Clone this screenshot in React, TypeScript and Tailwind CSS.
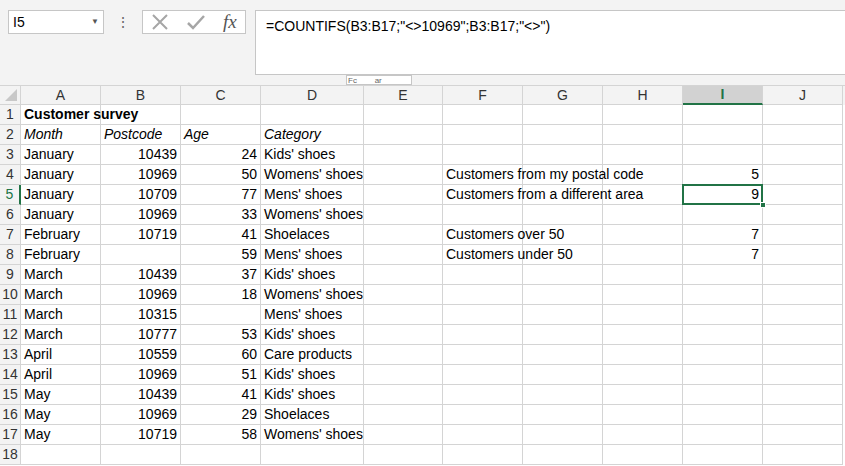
import React from 'react'

const cols = ['A', 'B', 'C', 'D', 'E', 'F', 'G', 'H', 'I', 'J']
const widths = ['w-[80px]', 'w-[80px]', 'w-[80px]', 'w-[103px]', 'w-[79px]', 'w-[80px]', 'w-[80px]', 'w-[80px]', 'w-[80px]', 'w-[80px]']

type Cell = { v: string; right?: boolean; bold?: boolean; italic?: boolean }
const rows: Record<number, Record<string, Cell>> = {
  1: { A: { v: 'Customer survey', bold: true } },
  2: { A: { v: 'Month', italic: true }, B: { v: 'Postcode', italic: true }, C: { v: 'Age', italic: true }, D: { v: 'Category', italic: true } },
}
const data: [string, string, string, string][] = [
  ['January', '10439', '24', "Kids' shoes"],
  ['January', '10969', '50', "Womens' shoes"],
  ['January', '10709', '77', "Mens' shoes"],
  ['January', '10969', '33', "Womens' shoes"],
  ['February', '10719', '41', 'Shoelaces'],
  ['February', '', '59', "Mens' shoes"],
  ['March', '10439', '37', "Kids' shoes"],
  ['March', '10969', '18', "Womens' shoes"],
  ['March', '10315', '', "Mens' shoes"],
  ['March', '10777', '53', "Kids' shoes"],
  ['April', '10559', '60', 'Care products'],
  ['April', '10969', '51', "Kids' shoes"],
  ['May', '10439', '41', "Kids' shoes"],
  ['May', '10969', '29', 'Shoelaces'],
  ['May', '10719', '58', "Womens' shoes"],
]
data.forEach((d, i) => {
  rows[i + 3] = { A: { v: d[0] }, B: { v: d[1], right: true }, C: { v: d[2], right: true }, D: { v: d[3] } }
})
rows[4].F = { v: 'Customers from my postal code' }
rows[4].I = { v: '5', right: true }
rows[5].F = { v: 'Customers from a different area' }
rows[5].I = { v: '9', right: true }
rows[7].F = { v: 'Customers over 50' }
rows[7].I = { v: '7', right: true }
rows[8].F = { v: 'Customers under 50' }
rows[8].I = { v: '7', right: true }

export default function App() {
  return (
    <div className="w-[845px] h-[466px] overflow-hidden bg-white text-[14px] text-black" style={{ fontFamily: '"Liberation Sans", Arial, sans-serif' }}>
      <div className="h-[85px] bg-[#f3f3f3] flex items-start pt-[10px] pl-[8px] relative">
        <div className="w-[96px] h-[24px] bg-white border border-[#c6c6c6] flex items-center justify-between px-[4px]">
          <span>I5</span>
          <span className="text-[8px] text-[#555]">▼</span>
        </div>
        <div className="w-[38px] h-[24px] flex items-center justify-center text-[#666] text-[14px]">⋮</div>
        <div className="w-[104px] h-[24px] bg-white border border-[#c6c6c6] flex items-center justify-around">
          <svg width="18" height="18" viewBox="0 0 18 18"><path d="M2 2L16 16M16 2L2 16" stroke="#a6a6a6" strokeWidth="2" /></svg>
          <svg width="20" height="18" viewBox="0 0 20 18"><path d="M2 10L7 15L18 3" stroke="#a6a6a6" strokeWidth="2.5" fill="none" /></svg>
          <span className="italic text-[19px] text-[#555]" style={{ fontFamily: '"Liberation Serif", serif' }}>fx</span>
        </div>
        <div className="ml-[9px] flex-1 h-[65px] bg-white border-l border-t border-b border-[#c6c6c6] px-[10px] pt-[5px]">
          =COUNTIFS(B3:B17;"&lt;&gt;10969";B3:B17;"&lt;&gt;")
        </div>
        <div className="absolute left-[346px] top-[75px] w-[66px] h-[10px] bg-white border border-[#c6c6c6] text-[8px] leading-[10px] text-[#666] overflow-hidden px-[1px]">Fc&nbsp;&nbsp;&nbsp;&nbsp;&nbsp;&nbsp;&nbsp;&nbsp;ar</div>
      </div>
      <div className="flex h-[20px] bg-[#f3f3f3] border-t border-[#d4d4d4]">
        <div className="w-[21px] border-r border-b border-[#d4d4d4] relative">
          <div className="absolute right-[3px] bottom-[3px] w-0 h-0 border-l-[12px] border-l-transparent border-b-[12px] border-b-[#c8c8c8]" />
        </div>
        {cols.map((c, i) => (
          <div key={c} className={`${widths[i]} shrink-0 flex items-center justify-center border-r ${c === 'I' ? 'bg-[#d2d2d2] text-[#217346] border-b-2 border-b-[#217346] border-r-[#d4d4d4] font-bold' : 'border-b border-[#d4d4d4] text-[#333]'}`}>{c}</div>
        ))}
      </div>
      {Array.from({ length: 18 }, (_, r) => r + 1).map((r) => (
        <div key={r} className="flex h-[20px]">
          <div className={`w-[21px] shrink-0 bg-[#f3f3f3] border-r border-b border-[#d4d4d4] flex items-center justify-center text-[#333] ${r === 5 ? 'bg-[#d2d2d2] text-[#217346] border-r-2 border-r-[#217346]' : ''}`}>{r}</div>
          {cols.map((c, i) => {
            const cell = rows[r]?.[c]
            return (
              <div key={c} className={`${widths[i]} shrink-0 border-r border-b border-[#d4d4d4] relative flex items-center px-[3px] whitespace-nowrap ${cell?.right ? 'justify-end' : ''}`}>
                {cell && (
                  <span className={`${cell.bold ? 'font-bold' : ''} ${cell.italic ? 'italic' : ''} relative z-10`}>{cell.v}</span>
                )}
                {r === 5 && c === 'I' && (
                  <>
                    <div className="absolute -left-[1px] -top-[1px] -right-[1px] -bottom-[1px] border-2 border-[#217346]" />
                    <div className="absolute -right-[4px] -bottom-[4px] w-[6px] h-[6px] bg-[#217346] border border-white z-20" />
                  </>
                )}
              </div>
            )
          })}
        </div>
      ))}
    </div>
  )
}
